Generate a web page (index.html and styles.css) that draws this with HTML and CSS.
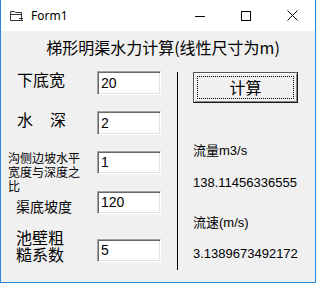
FILE: index.html
```html
<!DOCTYPE html>
<html>
<head>
<meta charset="utf-8">
<link rel="stylesheet" href="styles.css">
</head>
<body>
<div class="window">
  <div class="titlebar">
    <svg class="app-icon" width="14" height="12" viewBox="0 0 14 12">
      <path d="M0.5 1.5 H4.5 L5.5 2.5 H11.5 V10.5 H0.5 Z" fill="none" stroke="#333" stroke-width="1"/>
      <path d="M0.5 4.5 H11.5" stroke="#333" stroke-width="1"/>
      <path d="M9 8.5 H13 M11 10.5 H13" stroke="#333" stroke-width="1"/>
    </svg>
    <span class="caption">Form1</span>
    <div class="caption-buttons">
      <div class="cbtn"><svg width="10" height="10" viewBox="0 0 10 10"><path d="M0 5.5 H10" stroke="#000" stroke-width="1"/></svg></div>
      <div class="cbtn"><svg width="10" height="10" viewBox="0 0 10 10"><rect x="0.5" y="0.5" width="9" height="9" fill="none" stroke="#000" stroke-width="1"/></svg></div>
      <div class="cbtn"><svg width="11" height="11" viewBox="0 0 11 11"><path d="M0.5 0.5 L10.5 10.5 M10.5 0.5 L0.5 10.5" stroke="#000" stroke-width="1"/></svg></div>
    </div>
  </div>
  <div class="client">
    <div class="heading">梯形明渠水力计算(线性尺寸为m)</div>
    <div class="body">
      <div class="left">
        <div class="row r1">
          <div class="label l16 m16">下底宽</div>
          <div class="field">20</div>
        </div>
        <div class="row r2">
          <div class="label l16 m16"><span class="gapchar">水</span>深</div>
          <div class="field">2</div>
        </div>
        <div class="row r3">
          <div class="label l12">沟侧边坡水平宽度与深度之比</div>
          <div class="field short">1</div>
        </div>
        <div class="row r4">
          <div class="label l14">渠底坡度</div>
          <div class="field short">120</div>
        </div>
        <div class="row r5">
          <div class="label l16b"><div class="ln">池壁粗</div><div class="ln">糙系数</div></div>
          <div class="field short low">5</div>
        </div>
      </div>
      <div class="divider"></div>
      <div class="right">
        <div class="button">计算</div>
        <div class="out o1"><span class="cjk">流量</span>m3/s</div>
        <div class="out o2">138.11456336555</div>
        <div class="out o3"><span class="cjk">流速</span>(m/s)</div>
        <div class="out o4">3.1389673492172</div>
      </div>
    </div>
  </div>
</div>
</body>
</html>
```

FILE: styles.css
```css
html, body {
  margin: 0;
  padding: 0;
  background: #ffffff;
}
.window {
  width: 316px;
  height: 283px;
  box-sizing: border-box;
  border: 1px solid #2b88d8;
  border-top: none;
  display: flex;
  flex-direction: column;
  font-family: "Noto Sans CJK SC", sans-serif;
  color: #000;
}
.titlebar {
  height: 31px;
  background: #ffffff;
  display: flex;
  align-items: center;
  flex: none;
}
.app-icon {
  margin-left: 9px;
  flex: none;
}
.caption {
  margin-left: 7px;
  font-family: "Noto Sans", "Open Sans", sans-serif;
  font-size: 12px;
  line-height: 16px;
  color: #000;
}
.caption-buttons {
  margin-left: auto;
  display: flex;
  height: 31px;
}
.cbtn {
  width: 46px;
  height: 31px;
  display: flex;
  align-items: center;
  justify-content: center;
}
.client {
  flex: 1;
  background: #f0f0f0;
  display: flex;
  flex-direction: column;
}
.heading {
  padding-top: 7px;
  height: 18px;
  padding-bottom: 15px;
  line-height: 18px;
  font-size: 16px;
  text-align: center;
  padding-left: 10px;
  white-space: nowrap;
}
.body {
  display: flex;
  align-items: flex-start;
}
.left {
  width: 176px;
  display: flex;
  flex-direction: column;
}
.row {
  display: grid;
  grid-template-columns: 96px 64px;
  align-items: start;
}
.r1, .r2, .r3 { height: 40px; }
.r4 { height: 38px; }
.r5 { height: 34px; }
.l16 {
  font-size: 16px;
  line-height: 16px;
  margin-left: 16px;
  display: flex;
}
.gapchar {
  margin-right: 17px;
}
.l12 {
  font-size: 12px;
  line-height: 14px;
  margin-left: 7px;
  width: 74px;
}
.l14 {
  font-size: 14px;
  line-height: 14px;
  margin-left: 15px;
  padding-top: 8px;
}
.l16b {
  font-size: 16px;
  margin-left: 15px;
}
.l16b .ln {
  height: 17px;
  line-height: 17px;
}
.field {
  height: 24px;
  box-sizing: border-box;
  background: #ffffff;
  border-top: 1px solid #a0a0a0;
  border-left: 1px solid #a0a0a0;
  border-right: 1px solid #ffffff;
  border-bottom: 1px solid #ffffff;
  box-shadow: inset 1px 1px 0 #696969, inset -1px -1px 0 #e3e3e3;
  font-family: "Liberation Sans", sans-serif;
  font-size: 14px;
  line-height: 20px;
  padding-left: 3px;
  padding-top: 1px;
}
.field.short {
  height: 23px;
  line-height: 19px;
}
.field.low {
  margin-top: 10px;
}
.divider {
  width: 1px;
  height: 198px;
  margin-top: 1px;
  background: #000;
  flex: none;
}
.right {
  padding-left: 15px;
  display: flex;
  flex-direction: column;
  align-items: flex-start;
}
.button {
  position: relative;
  margin-top: 1px;
  width: 105px;
  height: 31px;
  box-sizing: border-box;
  border: 1px solid #555;
  border-right-color: #1a1a1a;
  border-bottom-color: #1a1a1a;
  box-shadow: inset 1px 1px 0 #ffffff, inset -1px -1px 0 #8a8a8a;
  background: #f0f0f0;
  font-size: 16px;
  line-height: 29px;
  text-align: center;
}
.button::after {
  content: "";
  position: absolute;
  left: 3px;
  top: 3px;
  right: 3px;
  bottom: 3px;
  border: 1px dotted #000;
}
.out {
  font-family: "Liberation Sans", "Noto Sans CJK SC", sans-serif;
  font-size: 13px;
  line-height: 14px;
  white-space: nowrap;
}
.cjk {
  font-family: "Noto Sans CJK SC", sans-serif;
  font-size: 13px;
}
.o1 { margin-top: 40px; }
.o2 { margin-top: 18px; }
.o3 { margin-top: 25px; }
.o4 { margin-top: 17px; }
```
